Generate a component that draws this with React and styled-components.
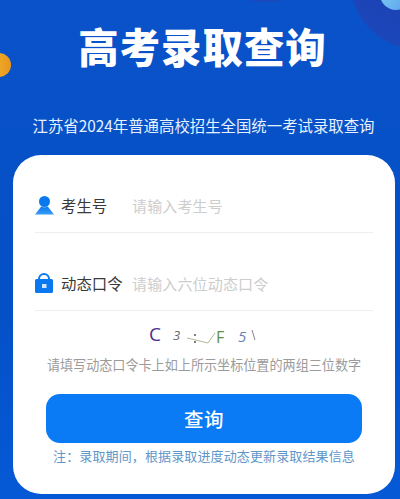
import React from 'react'
import styled, { createGlobalStyle } from 'styled-components'

const GlobalStyle = createGlobalStyle`
  html, body { margin: 0; padding: 0; }
  body { font-family: "Liberation Sans", "Noto Sans CJK SC", sans-serif; }
  * { box-sizing: border-box; }
`

const Page = styled.div`
  position: relative;
  width: 400px;
  height: 499px;
  overflow: hidden;
  background: linear-gradient(180deg, #0a52c9 0%, #0450c6 60%, #0659d6 100%);
  display: flex;
  flex-direction: column;
  align-items: center;
`
const Corner = styled.div`
  position: absolute;
  top: -90px;
  right: -90px;
  width: 140px;
  height: 140px;
  border-radius: 50%;
  background: linear-gradient(200deg, #2338ae, #1a49bb);
`
const TopSmudge = styled.div`
  position: absolute;
  top: -12px;
  left: 240px;
  width: 54px;
  height: 14px;
  border-radius: 50%;
  background: #1a49bb;
`
const Bubble = styled.div`
  position: absolute;
  top: -22px;
  right: -12px;
  width: 32px;
  height: 32px;
  border-radius: 50%;
  background: linear-gradient(120deg, #7fd2f2, #5a9cec);
`
const Sun = styled.div`
  position: absolute;
  top: 53px;
  left: -13px;
  width: 24px;
  height: 24px;
  border-radius: 50%;
  background: linear-gradient(90deg, #f2b632, #e8971c);
`
const Title = styled.h1`
  margin: 22px 0 0 5px;
  font-family: "Noto Sans CJK SC", sans-serif;
  font-size: 40.4px;
  line-height: 48px;
  font-weight: 900;
  letter-spacing: 1px;
  color: #fff;
  white-space: nowrap;
`
const Subtitle = styled.p`
  margin: 44px 0 0 7px;
  font-family: "Noto Sans CJK SC", sans-serif;
  font-size: 15.4px;
  line-height: 22px;
  color: #e6f1ff;
  white-space: nowrap;
`
const Card = styled.div`
  margin: 19px 5px 0 13px;
  align-self: stretch;
  height: 339px;
  border-radius: 28px;
  background: #fff;
  padding: 0 22px;
  display: flex;
  flex-direction: column;
  font-family: "Noto Sans CJK SC", sans-serif;
`
const Row = styled.div`
  height: 78px;
  flex: none;
  display: flex;
  align-items: center;
  padding-top: 23px;
  border-bottom: 1px solid #eeeeee;
`
const IconBox = styled.span`
  width: 26px;
  flex: none;
  display: flex;
`
const Label = styled.span`
  width: 72px;
  flex: none;
  font-size: 15.4px;
  color: #3a3a3a;
  white-space: nowrap;
`
const Placeholder = styled.span`
  margin-left: -1px;
  font-size: 15px;
  letter-spacing: 0.15px;
  color: #cdcdcd;
  white-space: nowrap;
`
const Captcha = styled.div`
  position: relative;
  align-self: center;
  width: 112px;
  height: 30px;
  margin: 8px 0 0 4px;
  flex: none;
  font-family: "Open Sans", sans-serif;
`
const Glyph = styled.span`
  position: absolute;
  left: ${({ $x }) => $x}px;
  top: ${({ $y }) => $y}px;
  font-size: ${({ $size }) => $size}px;
  line-height: 1;
  color: ${({ $color }) => $color};
  font-style: ${({ $tilt }) => ($tilt ? 'italic' : 'normal')};
`
const Noise = styled.svg`
  position: absolute;
  inset: 0;
`
const Hint = styled.p`
  margin: 6px 0 0;
  text-align: center;
  font-size: 13.1px;
  line-height: 20px;
  color: #9b9b9b;
  white-space: nowrap;
`
const Submit = styled.button`
  flex: none;
  align-self: center;
  margin: 19px 0 0;
  width: 316px;
  height: 49px;
  border: 0;
  border-radius: 14px;
  background: #0a7bf5;
  color: #fff;
  font-family: inherit;
  font-size: 19.5px;
  font-weight: 500;
  letter-spacing: 0.5px;
`
const Note = styled.p`
  margin: 3px 0 0;
  text-align: center;
  font-size: 13px;
  line-height: 19px;
  letter-spacing: 0.12px;
  color: #5f96c8;
  white-space: nowrap;
`

const UserIcon = () => (
  <svg width="19" height="19" viewBox="0 0 19 19">
    <defs>
      <linearGradient id="userFill" x1="0" y1="0" x2="0" y2="1">
        <stop offset="0" stopColor="#0a78ee" />
        <stop offset="1" stopColor="#3a9cf8" />
      </linearGradient>
    </defs>
    <circle cx="9.5" cy="5.5" r="5.5" fill="#0a78ee" />
    <path d="M6.2 10.5C7.5 11.6 11.5 11.6 12.8 10.5L19 18.5H0Z" fill="url(#userFill)" />
  </svg>
)

const LockIcon = () => (
  <svg width="18" height="20" viewBox="0 0 18 20">
    <path d="M4 8V6a5 5 0 0 1 10 0v2" fill="none" stroke="#0a78ee" strokeWidth="2" />
    <rect x="0" y="6" width="18" height="14" rx="1.5" fill="#0a78ee" />
    <rect x="7" y="11" width="4.5" height="4" fill="#cfe5fc" />
  </svg>
)

const App = () => (
  <>
    <GlobalStyle />
    <Page>
      <Corner />
      <TopSmudge />
      <Bubble />
      <Sun />
      <Title>高考录取查询</Title>
      <Subtitle>江苏省2024年普通高校招生全国统一考试录取查询</Subtitle>
      <Card>
        <Row>
          <IconBox><UserIcon /></IconBox>
          <Label>考生号</Label>
          <Placeholder>请输入考生号</Placeholder>
        </Row>
        <Row>
          <IconBox><LockIcon /></IconBox>
          <Label>动态口令</Label>
          <Placeholder>请输入六位动态口令</Placeholder>
        </Row>
        <Captcha>
          <Glyph $x={-1} $y={6} $size={19} $color="#4b2f8f">C</Glyph>
          <Glyph $x={23} $y={10} $size={13} $color="#666" $tilt>3</Glyph>
          <Glyph $x={66} $y={10} $size={16} $color="#5f8f3a">F</Glyph>
          <Glyph $x={88} $y={10} $size={15} $color="#6a7fb5" $tilt>5</Glyph>
          <Noise width="112" height="30" viewBox="0 0 112 30">
            <path d="M37 19L58 24L65 14" fill="none" stroke="#9aa87c" strokeWidth="0.8" />
            <circle cx="45" cy="16" r="0.9" fill="#444" />
            <circle cx="45" cy="23" r="0.9" fill="#444" />
            <path d="M102 11L105 21" stroke="#667" strokeWidth="0.8" />
          </Noise>
        </Captcha>
        <Hint>请填写动态口令卡上如上所示坐标位置的两组三位数字</Hint>
        <Submit>查询</Submit>
        <Note>注：录取期间，根据录取进度动态更新录取结果信息</Note>
      </Card>
    </Page>
  </>
)

export default App
